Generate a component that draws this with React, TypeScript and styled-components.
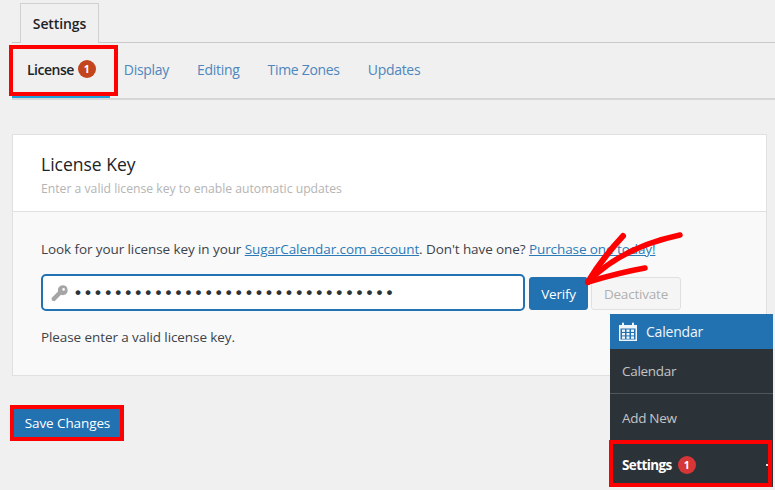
import React from "react";
import styled, { createGlobalStyle } from "styled-components";

const GlobalStyle = createGlobalStyle`
  html, body {
    margin: 0;
    padding: 0;
    background: #f0f0f0;
    overflow: hidden;
  }
  body {
    font-family: "Open Sans", "Noto Sans", "Liberation Sans", sans-serif;
    font-size: 13.5px;
    color: #3c434a;
  }
`;

const Page = styled.div`
  position: relative;
  width: 775px;
  height: 490px;
  padding: 3px 8px 0 12px;
  box-sizing: border-box;
  overflow: hidden;
`;

const TabBar = styled.div`
  display: flex;
  height: 39px;
  padding-left: 8px;
  border-bottom: 1px solid #c9c9c9;
  margin-right: -8px;
`;

const Tab = styled.div`
  display: flex;
  align-items: center;
  justify-content: center;
  width: 79px;
  height: 40px;
  box-sizing: border-box;
  border: 1px solid #d0d0d0;
  border-bottom: none;
  background: #f0f0f0;
  font-size: 14px;
  font-weight: 600;
  color: #1d2327;
  letter-spacing: -0.1px;
`;

const SubNav = styled.nav`
  display: flex;
  height: 55px;
  border-bottom: 2px solid #d6d6d6;
  margin-right: -8px;
`;

const SubLink = styled.a<{ $active?: boolean }>`
  display: flex;
  align-items: center;
  gap: 4px;
  box-sizing: border-box;
  height: 55px;
  padding: ${(p) => (p.$active ? "0 14px 0 15px" : "0 14px")};
  font-size: 14px;
  letter-spacing: ${(p) => (p.$active ? "-0.5px" : "-0.3px")};
  font-weight: ${(p) => (p.$active ? 600 : 400)};
  color: ${(p) => (p.$active ? "#1d2327" : "#4f86bd")};
  border-bottom: 3px solid ${(p) => (p.$active ? "#1fa0dc" : "transparent")};
`;

const Badge = styled.span<{ $color: string }>`
  display: inline-flex;
  align-items: center;
  justify-content: center;
  width: 18px;
  height: 18px;
  border-radius: 50%;
  background: ${(p) => p.$color};
  color: #fff;
  font-size: 10.5px;
  font-weight: 700;
  letter-spacing: 0;
`;

const Card = styled.section`
  margin-top: 34px;
  height: 242px;
  box-sizing: border-box;
  border: 1px solid #e0e0e0;
  background: #f9f9f9;
`;

const CardHead = styled.header`
  height: 77px;
  box-sizing: border-box;
  padding: 17px 28px 0;
  background: #fff;
  border-bottom: 1px solid #e0e0e0;
`;

const Title = styled.h2`
  margin: 0;
  font-size: 17.5px;
  line-height: 24px;
  font-weight: 500;
  color: #1d2327;
`;

const Subtitle = styled.p`
  margin: 4px 0 0;
  font-size: 12.2px;
  line-height: 18px;
  color: #b4b4b4;
`;

const CardBody = styled.div`
  padding: 27px 28px 0;
`;

const Line = styled.p`
  margin: 0;
  line-height: 20px;
  letter-spacing: -0.09px;
`;

const TextLink = styled.a`
  color: #2c7bb6;
  text-decoration: underline;
`;

const KeyRow = styled.div`
  display: flex;
  align-items: flex-start;
  gap: 4px;
  margin: 15px 0 16px;
  height: 37px;
`;

const KeyField = styled.div`
  display: flex;
  align-items: center;
  gap: 6px;
  width: 484px;
  height: 37px;
  box-sizing: border-box;
  padding: 0 8px;
  background: #fff;
  border: 2px solid #2271b1;
  border-radius: 5px;
`;

const Dots = styled.span`
  font-family: "Liberation Sans", sans-serif;
  font-size: 17px;
  font-weight: 700;
  letter-spacing: 4.1px;
  color: #2c3338;
  white-space: nowrap;
`;

const Button = styled.button<{ $disabled?: boolean }>`
  height: 33px;
  margin: ${(p) => (p.$disabled ? "3px 0 0 -1px" : "3px 0 0")};
  padding: 0;
  width: ${(p) => (p.$disabled ? "90px" : "59px")};
  border-radius: 3px;
  font: inherit;
  letter-spacing: -0.2px;
  border: 1px solid ${(p) => (p.$disabled ? "#e0e0e0" : "#2271b1")};
  background: ${(p) => (p.$disabled ? "#f5f5f5" : "#2271b1")};
  color: ${(p) => (p.$disabled ? "#b0b0b0" : "#fff")};
`;

const SaveRow = styled.div`
  margin-top: 33px;
`;

const SaveButton = styled.button`
  width: 106px;
  height: 28px;
  margin-left: 2px;
  padding: 0 0 0 1px;
  border: none;
  background: #2271b1;
  color: #fff;
  font: inherit;
  letter-spacing: -0.1px;
  outline: 4px solid #f00;
`;

const Highlight = styled.div`
  position: absolute;
  left: 9px;
  top: 45px;
  width: 109px;
  height: 51px;
  box-sizing: border-box;
  border: 4px solid #f00;
`;

const Arrow = styled.svg`
  position: absolute;
  left: 580px;
  top: 228px;
  width: 110px;
  height: 70px;
`;

const Flyout = styled.aside`
  position: absolute;
  left: 610px;
  top: 314px;
  width: 163px;
  height: 173px;
  background: #2c3338;
`;

const FlyoutHead = styled.div`
  display: flex;
  align-items: center;
  gap: 9px;
  height: 35px;
  padding-left: 9px;
  background: #2271b1;
  color: #f0f6fc;
  font-size: 14px;
  letter-spacing: -0.2px;
`;

const FlyoutItem = styled.div<{ $h: number; $line?: boolean; $active?: boolean }>`
  display: flex;
  align-items: center;
  gap: 6px;
  box-sizing: border-box;
  height: ${(p) => p.$h}px;
  padding-left: 12px;
  font-size: 13.5px;
  letter-spacing: ${(p) => (p.$active ? "-0.6px" : "-0.3px")};
  color: ${(p) => (p.$active ? "#fff" : "#c3c4c7")};
  font-weight: ${(p) => (p.$active ? 700 : 400)};
  border-bottom: ${(p) => (p.$line ? "1px solid #50565b" : "none")};
`;

const FlyoutHighlight = styled.div`
  position: absolute;
  left: -1px;
  top: 126px;
  width: 163px;
  height: 47px;
  box-sizing: border-box;
  border: 4px solid #f00;
`;

const Caret = styled.span`
  position: absolute;
  right: 5px;
  top: 150px;
  width: 2px;
  height: 2px;
  background: #e8e8e8;
`;

const KeyIcon = () => (
  <svg width="18" height="18" viewBox="0 0 18 18">
    <path
      fill="#a5a5a5"
      d="M11.6 1.2a5 5 0 0 1 1 9.9 5 5 0 0 1-2.6-.3L3.6 17.2l-2.8-.6-.2-2.6 6.4-6.4a5 5 0 0 1 4.6-6.4z"
    />
    <circle cx="12.6" cy="5.4" r="1.3" fill="#fff" />
  </svg>
);

const CalendarIcon = () => (
  <svg width="18" height="19" viewBox="0 0 18 19">
    <path
      fill="#f0f6fc"
      d="M0 3h3V1.5a1 1 0 0 1 2 0V3h8V1.5a1 1 0 0 1 2 0V3h3v16H0z"
    />
    <rect x="1.5" y="6.5" width="15" height="11" fill="#2271b1" />
    <g fill="#f0f6fc">
      <rect x="3" y="7.5" width="3" height="2.4" />
      <rect x="7.5" y="7.5" width="3" height="2.4" />
      <rect x="12" y="7.5" width="3" height="2.4" />
      <rect x="3" y="11" width="3" height="2.4" />
      <rect x="7.5" y="11" width="3" height="2.4" />
      <rect x="12" y="11" width="3" height="2.4" />
      <rect x="3" y="14.4" width="3" height="2.4" />
      <rect x="7.5" y="14.4" width="3" height="2.4" />
      <rect x="12" y="14.4" width="3" height="2.4" />
    </g>
  </svg>
);

export default function App() {
  return (
    <>
      <GlobalStyle />
      <Page>
        <TabBar>
          <Tab>Settings</Tab>
        </TabBar>
        <SubNav>
          <SubLink $active>
            License <Badge $color="#c2451e">1</Badge>
          </SubLink>
          <SubLink>Display</SubLink>
          <SubLink>Editing</SubLink>
          <SubLink>Time Zones</SubLink>
          <SubLink>Updates</SubLink>
        </SubNav>

        <Card>
          <CardHead>
            <Title>License Key</Title>
            <Subtitle>Enter a valid license key to enable automatic updates</Subtitle>
          </CardHead>
          <CardBody>
            <Line>
              Look for your license key in your <TextLink>SugarCalendar.com account</TextLink>.
              Don't have one? <TextLink>Purchase one today!</TextLink>
            </Line>
            <KeyRow>
              <KeyField>
                <KeyIcon />
                <Dots>••••••••••••••••••••••••••••••••</Dots>
              </KeyField>
              <Button>Verify</Button>
              <Button $disabled>Deactivate</Button>
            </KeyRow>
            <Line>Please enter a valid license key.</Line>
          </CardBody>
        </Card>

        <SaveRow>
          <SaveButton>Save Changes</SaveButton>
        </SaveRow>

        <Highlight />

        <Flyout>
          <FlyoutHead>
            <CalendarIcon />
            Calendar
          </FlyoutHead>
          <FlyoutItem $h={45} $line>Calendar</FlyoutItem>
          <FlyoutItem $h={47}>Add New</FlyoutItem>
          <FlyoutItem $h={47} $active>
            Settings <Badge $color="#d63638">1</Badge>
          </FlyoutItem>
          <FlyoutHighlight />
          <Caret />
        </Flyout>

        <Arrow viewBox="0 0 110 70">
          <g fill="none" stroke="#f00" strokeLinecap="round" strokeLinejoin="round">
            <path d="M8 54 C18 37 30 22 43 8" strokeWidth="6" />
            <path d="M8 54 C28 33 58 16 100 7" strokeWidth="5.5" />
            <path d="M8 54 C28 48 48 43 65 40" strokeWidth="5.5" />
          </g>
        </Arrow>
      </Page>
    </>
  );
}
